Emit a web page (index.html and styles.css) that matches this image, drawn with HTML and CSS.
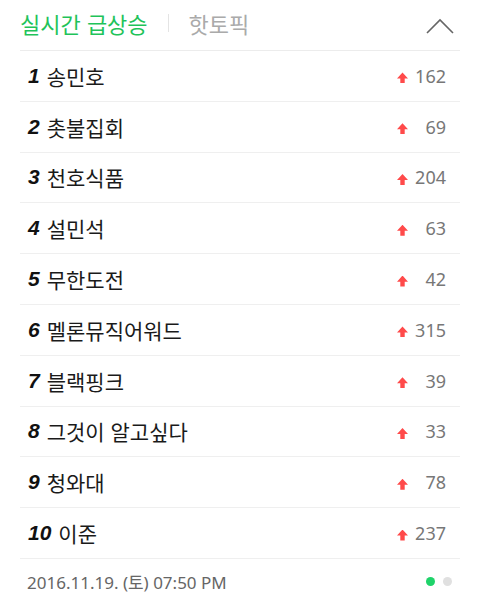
FILE: index.html
```html
<!DOCTYPE html>
<html lang="ko">
<head>
  <meta charset="UTF-8">
  <meta name="viewport" content="width=device-width, initial-scale=1.0">
  <title>실시간 급상승</title>
  <link rel="stylesheet" href="styles.css">
</head>
<body>

  <div class="panel">
    <div class="tabs">
      <span class="tab active">실시간 급상승</span>
      <span class="sep"></span>
      <span class="tab">핫토픽</span>
      <svg class="fold" width="28" height="16" viewBox="0 0 28 16">
        <polyline points="1,15 14,2 27,15" fill="none" stroke="#666" stroke-width="1.6"/>
      </svg>
    </div>

    <ol class="ranks">
      <li><b>1</b><span class="word">송민호</span><i class="up"></i><span class="cnt">162</span></li>
      <li><b>2</b><span class="word">촛불집회</span><i class="up"></i><span class="cnt">69</span></li>
      <li><b>3</b><span class="word">천호식품</span><i class="up"></i><span class="cnt">204</span></li>
      <li><b>4</b><span class="word">설민석</span><i class="up"></i><span class="cnt">63</span></li>
      <li><b>5</b><span class="word">무한도전</span><i class="up"></i><span class="cnt">42</span></li>
      <li><b>6</b><span class="word">멜론뮤직어워드</span><i class="up"></i><span class="cnt">315</span></li>
      <li><b>7</b><span class="word">블랙핑크</span><i class="up"></i><span class="cnt">39</span></li>
      <li><b>8</b><span class="word">그것이 알고싶다</span><i class="up"></i><span class="cnt">33</span></li>
      <li><b>9</b><span class="word">청와대</span><i class="up"></i><span class="cnt">78</span></li>
      <li><b>10</b><span class="word">이준</span><i class="up"></i><span class="cnt">237</span></li>
    </ol>

    <div class="foot">
      <span class="time">2016.11.19. (토) 07:50 PM</span>
      <span class="dots"><i class="on"></i><i></i></span>
    </div>
  </div>

</body>
</html>
```

FILE: styles.css
```css
body {
  margin: 0;
  background: #fff;
  font-family: "Noto Sans", "Noto Sans CJK KR", sans-serif;
  color: #222;
}
.panel {
  padding: 0 20px;
}
.tabs {
  display: flex;
  align-items: center;
  height: 51px;
  border-bottom: 1px solid #ececec;
  box-sizing: border-box;
  padding-bottom: 4px;
}
.tab {
  font-family: "Noto Sans CJK KR", sans-serif;
  font-size: 22px;
  color: #aaa;
}
.tab.active {
  color: #1fc35a;
}
.sep {
  width: 1px;
  height: 18px;
  background: #e4e4e4;
  margin: 0 20px 0 20px;
}
.fold {
  margin-left: auto;
  margin-right: 6px;
  margin-top: 6px;
}
.ranks {
  list-style: none;
  margin: 0;
  padding: 0;
}
.ranks li {
  display: flex;
  align-items: center;
  height: 50.8px;
  border-bottom: 1px solid #efefef;
  box-sizing: border-box;
  padding: 0 14px 0 8px;
}
.ranks b {
  font-family: "Liberation Sans", sans-serif;
  font-style: italic;
  font-weight: bold;
  font-size: 21px;
  color: #111;
  margin-right: 7px;
}
.word {
  font-family: "Noto Sans CJK KR", sans-serif;
  font-size: 21px;
  color: #1a1a1a;
  flex: 1;
}
.up {
  width: 11px;
  height: 11px;
  margin-top: 4px;
  background: #ff4a4a;
  clip-path: polygon(50% 0, 100% 55%, 70% 55%, 70% 100%, 30% 100%, 30% 55%, 0 55%);
}
.cnt {
  width: 38px;
  text-align: right;
  font-size: 18px;
  color: #777;
}
.foot {
  display: flex;
  align-items: center;
  height: 46px;
  padding: 0 7px;
}
.time {
  font-size: 17px;
  color: #666;
  flex: 1;
}
.dots {
  display: flex;
  gap: 8px;
  margin-right: 1px;
}
.dots i {
  width: 9px;
  height: 9px;
  border-radius: 50%;
  background: #e0e0e0;
}
.dots i.on {
  background: #1fd36a;
}
```
